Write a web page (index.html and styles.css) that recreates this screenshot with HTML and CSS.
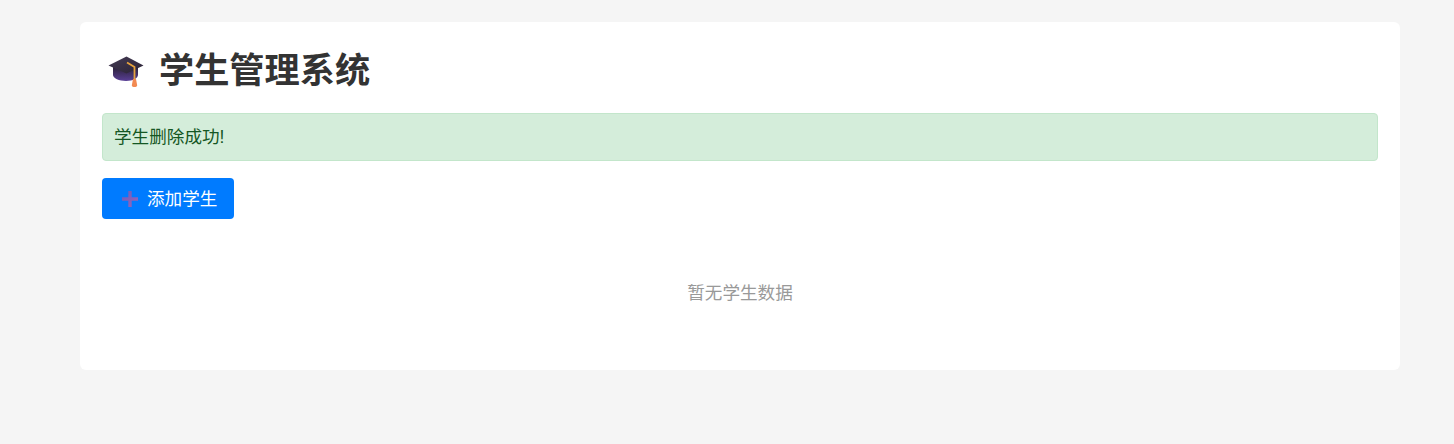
FILE: index.html
```html
<!DOCTYPE html>
<html lang="zh-CN">
<head>
<meta charset="utf-8">
<title>学生管理系统</title>
<link rel="stylesheet" href="styles.css">
</head>
<body>
<main class="card">
  <h1 class="title">
    <svg class="cap" viewBox="0 0 40 40" aria-hidden="true">
      <defs>
        <linearGradient id="capBody" x1="0" y1="0" x2="0" y2="1">
          <stop offset="0" stop-color="#2b2238"/>
          <stop offset="1" stop-color="#5a3f96"/>
        </linearGradient>
        <linearGradient id="capTop" x1="0" y1="0" x2="1" y2="1">
          <stop offset="0" stop-color="#453c54"/>
          <stop offset="1" stop-color="#2a2236"/>
        </linearGradient>
      </defs>
      <path d="M7 17v8c0 3 6 6 13 6s12-3 12-6v-8z" fill="url(#capBody)"/>
      <path d="M2.500 15.500 20.500 6.500 37.500 15.500 20.500 23.500z" fill="url(#capTop)"/>
      <path d="M21 12.500 28.500 17v14" fill="none" stroke="#e5a23e" stroke-width="1.800"/>
      <path d="M27 29h3l1.200 6.500c-.5 2-5 2-5.400 0z" fill="#f28a52"/>
    </svg>
    <span>学生管理系统</span>
  </h1>
  <div class="alert">学生删除成功!</div>
  <button class="add" type="button">
    <svg class="plus" viewBox="0 0 18 18" aria-hidden="true">
      <defs>
        <linearGradient id="plusFill" x1="0" y1="0" x2="1" y2="1">
          <stop offset="0" stop-color="#6a5cc0"/>
          <stop offset="1" stop-color="#9a66b6"/>
        </linearGradient>
      </defs>
      <path d="M7.300 1h3.400v6.300H17v3.400h-6.300V17H7.300v-6.300H1V7.300h6.300z" fill="url(#plusFill)"/>
    </svg>
    <span>添加学生</span>
  </button>
  <p class="empty">暂无学生数据</p>
</main>
</body>
</html>
```
FILE: styles.css
```css
* { box-sizing: border-box; }
html, body { margin: 0; padding: 0; }
body {
  min-height: 444px;
  background: #f5f5f5;
  font-family: "Liberation Sans", "Noto Sans CJK SC", sans-serif;
  font-size: 17.6px;
  color: #333;
}
.card {
  width: 1320px;
  margin: 22px 0 0 80px;
  padding: 22px;
  background: #fff;
  border-radius: 6px;
}
.title {
  display: flex;
  align-items: center;
  gap: 13px;
  height: 52px;
  margin: 0 0 17px;
  padding: 2px 0 0 4px;
  font-size: 35.200px;
  font-weight: 700;
  line-height: 50px;
  color: #333;
}
.cap { width: 40px; height: 40px; flex: none; margin-top: -2px; }
.alert {
  height: 48px;
  margin-bottom: 17px;
  padding: 0 11px;
  border: 1px solid #c3e6cb;
  border-radius: 4px;
  background: #d4edda;
  color: #155724;
  line-height: 46px;
}
.add {
  display: flex;
  align-items: center;
  gap: 8px;
  width: 132px;
  height: 41px;
  padding: 0 0 2px 19px;
  border: 0;
  border-radius: 4px;
  background: #007bff;
  color: #fff;
  font: inherit;
}
.plus { width: 18px; height: 18px; flex: none; margin-top: 2px; }
.empty {
  margin: 0;
  padding: 60px 0 41px;
  color: #999;
  line-height: 28px;
  text-align: center;
}
```
